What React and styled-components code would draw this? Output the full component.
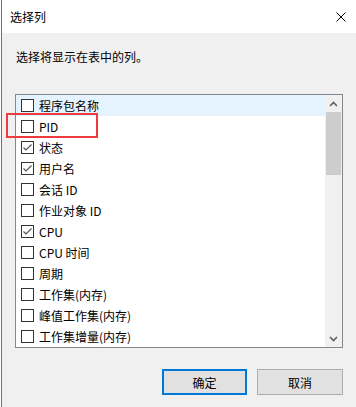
import React from 'react';
import styled, { createGlobalStyle } from 'styled-components';

const GlobalStyle = createGlobalStyle`
body {
    margin: 0;
    background: #ffffff;
    font-family: "Noto Sans CJK SC", "Noto Sans", sans-serif;
    font-size: 12px;
    color: #000000;
}
`;

const columns = [
    { name: '程序包名称', checked: false, hover: true },
    { name: 'PID', checked: false },
    { name: '状态', checked: true },
    { name: '用户名', checked: true },
    { name: '会话 ID', checked: false },
    { name: '作业对象 ID', checked: false },
    { name: 'CPU', checked: true },
    { name: 'CPU 时间', checked: false },
    { name: '周期', checked: false },
    { name: '工作集(内存)', checked: false },
    { name: '峰值工作集(内存)', checked: false },
    { name: '工作集增量(内存)', checked: false },
];

const Window = styled.div`
position: relative;
margin-left: 1px;
width: 355px;
height: 407px;
box-sizing: border-box;
border-left: 1px solid #2b80d6;
background: #f0f0f0;
overflow: hidden;
`;

const TitleBar = styled.div`
display: flex;
align-items: center;
justify-content: space-between;
height: 33px;
padding: 1px 0 0 8px;
box-sizing: border-box;
background: #ffffff;
`;

const Title = styled.span`
font-size: 12px;
line-height: 16px;
`;

const CloseButton = styled.div`
display: flex;
align-items: center;
justify-content: center;
width: 30px;
height: 32px;
`;

const Content = styled.div`
display: flex;
flex-direction: column;
padding: 16px 13px 0 13px;
`;

const Prompt = styled.div`
padding-left: 1px;
line-height: 16px;
`;

const ListBox = styled.div`
display: flex;
margin-top: 29px;
height: 254px;
box-sizing: border-box;
border: 1px solid #828790;
background: #ffffff;
`;

const Rows = styled.div`
flex: 1;
overflow: hidden;
`;

const Row = styled.div`
display: flex;
align-items: center;
gap: 5px;
height: 21px;
padding-left: 5px;
background: ${p => (p.$hover ? '#e5f3ff' : 'transparent')};
white-space: nowrap;
`;

const Box = styled.span`
display: flex;
align-items: center;
justify-content: center;
width: 13px;
height: 13px;
box-sizing: border-box;
border: 1px solid #333333;
background: #ffffff;
flex-shrink: 0;
`;

const Label = styled.span`
line-height: 16px;
`;

const ScrollBar = styled.div`
display: flex;
flex-direction: column;
width: 17px;
background: #f0f0f0;
`;

const Arrow = styled.div`
display: flex;
align-items: center;
justify-content: center;
height: 17px;
flex-shrink: 0;
`;

const Track = styled.div`
flex: 1;
`;

const Thumb = styled.div`
margin: 0 1px;
height: 63px;
background: #cdcdcd;
`;

const ButtonRow = styled.div`
display: flex;
justify-content: flex-end;
gap: 10px;
margin-top: 21px;
`;

const Button = styled.div`
display: flex;
align-items: center;
justify-content: center;
width: ${p => (p.$primary ? '85px' : '86px')};
height: 26px;
box-sizing: border-box;
background: #e1e1e1;
border: ${p => (p.$primary ? '2px solid #0078d7' : '1px solid #adadad')};
`;

const Mark = styled.div`
position: absolute;
left: 4px;
top: 113px;
width: 92px;
height: 25px;
box-sizing: border-box;
border: 2px solid #ee3b3b;
`;

const Check = () => (
    <svg width="11" height="11" viewBox="0 0 11 11">
        <path d="M1.5 5.5 L4 8 L9.5 2.5" fill="none" stroke="#555555" strokeWidth="1.2" />
    </svg>
);

const Chevron = ({ up }) => (
    <svg width="9" height="6" viewBox="0 0 9 6">
        <path d={up ? 'M1 5 L4.5 1.5 L8 5' : 'M1 1 L4.5 4.5 L8 1'} fill="none" stroke="#606060" strokeWidth="1.6" />
    </svg>
);

const App = () => {
    return (
        <Window>
            <GlobalStyle />
            <TitleBar>
                <Title>选择列</Title>
                <CloseButton>
                    <svg width="10" height="10" viewBox="0 0 10 10">
                        <path d="M0.5 0.5 L9.5 9.5 M9.5 0.5 L0.5 9.5" stroke="#000000" strokeWidth="1" />
                    </svg>
                </CloseButton>
            </TitleBar>
            <Content>
                <Prompt>选择将显示在表中的列。</Prompt>
                <ListBox>
                    <Rows>
                        {columns.map(c => (
                            <Row key={c.name} $hover={c.hover}>
                                <Box>{c.checked && <Check />}</Box>
                                <Label>{c.name}</Label>
                            </Row>
                        ))}
                    </Rows>
                    <ScrollBar>
                        <Arrow><Chevron up /></Arrow>
                        <Track><Thumb /></Track>
                        <Arrow><Chevron /></Arrow>
                    </ScrollBar>
                </ListBox>
                <ButtonRow>
                    <Button $primary>确定</Button>
                    <Button>取消</Button>
                </ButtonRow>
            </Content>
            <Mark />
        </Window>
    );
};

export default App;
